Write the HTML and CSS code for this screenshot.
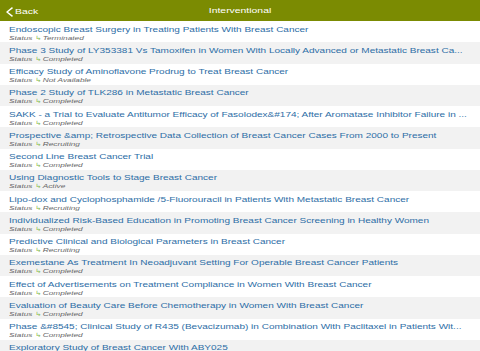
FILE: index.html
```html
<!DOCTYPE html>
<html>
<head>
<meta charset="utf-8">
<link rel="stylesheet" href="styles.css">
</head>
<body>
<div class="nav">
  <div class="back"><svg class="chev" width="9" height="10" viewBox="0 0 9 10"><path d="M7.5 0.6 L2 5 L7.5 9.4" fill="none" stroke="#fff" stroke-width="1.5" stroke-linejoin="round"/></svg><span class="sx">Back</span></div>
  <div class="title"><span class="sxc">Interventional</span></div>
</div>
<ul class="list">
  <li class="row"><div class="t">Endoscopic Breast Surgery in Treating Patients With Breast Cancer</div><div class="s">Status <span class="ic">&#8627;</span>Terminated</div></li>
  <li class="row"><div class="t">Phase 3 Study of LY353381 Vs Tamoxifen in Women With Locally Advanced or Metastatic Breast Ca...</div><div class="s">Status <span class="ic">&#8627;</span>Completed</div></li>
  <li class="row"><div class="t">Efficacy Study of Aminoflavone Prodrug to Treat Breast Cancer</div><div class="s">Status <span class="ic">&#8627;</span>Not Available</div></li>
  <li class="row"><div class="t">Phase 2 Study of TLK286 in Metastatic Breast Cancer</div><div class="s">Status <span class="ic">&#8627;</span>Completed</div></li>
  <li class="row"><div class="t">SAKK - a Trial to Evaluate Antitumor Efficacy of Fasolodex&amp;#174; After Aromatase Inhibitor Failure in ...</div><div class="s">Status <span class="ic">&#8627;</span>Completed</div></li>
  <li class="row"><div class="t">Prospective &amp;amp; Retrospective Data Collection of Breast Cancer Cases From 2000 to Present</div><div class="s">Status <span class="ic">&#8627;</span>Recruiting</div></li>
  <li class="row"><div class="t">Second Line Breast Cancer Trial</div><div class="s">Status <span class="ic">&#8627;</span>Completed</div></li>
  <li class="row"><div class="t">Using Diagnostic Tools to Stage Breast Cancer</div><div class="s">Status <span class="ic">&#8627;</span>Active</div></li>
  <li class="row"><div class="t">Lipo-dox and Cyclophosphamide /5-Fluorouracil in Patients With Metastatic Breast Cancer</div><div class="s">Status <span class="ic">&#8627;</span>Recruiting</div></li>
  <li class="row"><div class="t">Individualized Risk-Based Education in Promoting Breast Cancer Screening in Healthy Women</div><div class="s">Status <span class="ic">&#8627;</span>Completed</div></li>
  <li class="row"><div class="t">Predictive Clinical and Biological Parameters in Breast Cancer</div><div class="s">Status <span class="ic">&#8627;</span>Recruiting</div></li>
  <li class="row"><div class="t">Exemestane As Treatment In Neoadjuvant Setting For Operable Breast Cancer Patients</div><div class="s">Status <span class="ic">&#8627;</span>Completed</div></li>
  <li class="row"><div class="t">Effect of Advertisements on Treatment Compliance in Women With Breast Cancer</div><div class="s">Status <span class="ic">&#8627;</span>Completed</div></li>
  <li class="row"><div class="t">Evaluation of Beauty Care Before Chemotherapy in Women With Breast Cancer</div><div class="s">Status <span class="ic">&#8627;</span>Completed</div></li>
  <li class="row"><div class="t">Phase &amp;#8545; Clinical Study of R435 (Bevacizumab) in Combination With Paclitaxel in Patients Wit...</div><div class="s">Status <span class="ic">&#8627;</span>Completed</div></li>
  <li class="row"><div class="t">Exploratory Study of Breast Cancer With ABY025</div><div class="s">Status <span class="ic">&#8627;</span>Completed</div></li>
</ul>
</body>
</html>
```
FILE: styles.css
```css
html, body { margin: 0; padding: 0; }
body {
  width: 480px;
  height: 351px;
  overflow: hidden;
  font-family: "Liberation Sans", Arial, sans-serif;
  background: #fff;
}
.nav {
  height: 21px;
  background: #7b8b02;
  color: #fff;
  display: flex;
  align-items: center;
  position: relative;
  font-size: 8px;
  line-height: 10px;
}
.back {
  display: flex;
  align-items: center;
  padding-left: 5px;
  gap: 1px;
  padding-top: 2px;
}
.chev { display: block; }
.sx {
  display: inline-block;
  transform: scaleX(1.3);
  transform-origin: 0 50%;
}
.title {
  position: absolute;
  left: 0;
  right: 0;
  top: 6px;
  text-align: center;
  pointer-events: none;
}
.sxc {
  display: inline-block;
  transform: scaleX(1.3);
  transform-origin: 50% 50%;
}
.list { list-style: none; margin: 0; padding: 0; }
.row {
  height: 21.25px;
  box-sizing: border-box;
  padding: 3.7px 0 0 9px;
  overflow: hidden;
}
.row:nth-child(even) { background: #f2f2f2; }
.t, .s {
  width: max-content;
  white-space: nowrap;
  transform: scaleX(1.335);
  transform-origin: 0 0;
}
.t {
  font-size: 7.5px;
  line-height: 9px;
  color: #2d6ea6;
}
.s {
  font-size: 6.2px;
  line-height: 7.3px;
  color: #666;
  font-style: italic;
}
.ic { color: #8dc05a; font-style: normal; margin-right: 1px; }
```
